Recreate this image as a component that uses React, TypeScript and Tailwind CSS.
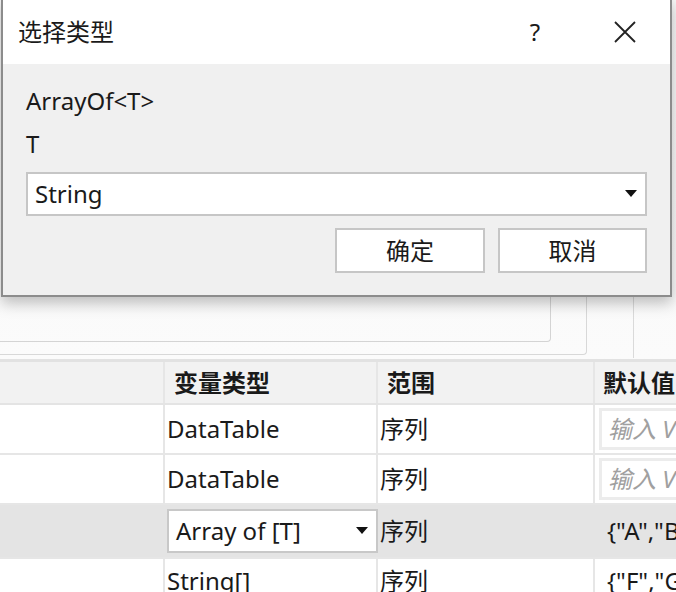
import React from "react";

const font = { fontFamily: '"Noto Sans", "Noto Sans CJK SC", sans-serif' };

function Arrow({ className = "" }: { className?: string }) {
  return (
    <svg width="12" height="8" viewBox="0 0 12 8" className={className}>
      <path d="M0 0 L12 0 L6 7 Z" fill="#111" />
    </svg>
  );
}

function Cell({ w, children, className = "" }: { w: string; children?: React.ReactNode; className?: string }) {
  return <div className={`${w} shrink-0 ${className}`}>{children}</div>;
}

export default function App() {
  return (
    <div
      className="relative w-[676px] h-[592px] overflow-hidden bg-white text-[#1a1a1a]"
      style={font}
    >
      {/* background area behind dialog */}
      <div className="h-[362px] flex bg-gradient-to-b from-[#f7f7f7] to-[#fbfbfb] border-b-[3px] border-[#e2e2e2]">
        <div className="w-[634px] h-[358px] border-r border-[#dadada]">
          <div className="w-[587px] h-[355px] border-r border-b border-[#d8d8d8] rounded-br-[4px]">
            <div className="w-[551px] h-[342px] border-r border-b border-[#d4d4d4] rounded-br-[4px]" />
          </div>
        </div>
      </div>

      {/* table */}
      <div className="text-[24px] leading-none">
        {/* header */}
        <div className="flex h-[43px] bg-[#f2f2f2] border-b-[2px] border-[#e4e4e4] font-bold">
          <Cell w="w-[165px]" className="border-r-[2px] border-[#e6e6e6]" />
          <Cell w="w-[213px]" className="border-r-[2px] border-[#e6e6e6] pl-[9px] flex items-center">变量类型</Cell>
          <Cell w="w-[217px]" className="border-r-[2px] border-[#e6e6e6] pl-[9px] flex items-center">范围</Cell>
          <div className="flex-1 min-w-0 overflow-hidden pl-[8px] flex items-center whitespace-nowrap">默认值</div>
        </div>
        {/* row 1 */}
        {[0, 1].map((i) => (
          <div key={i} className="flex h-[50px] border-b-[2px] border-[#e6e6e6]">
            <Cell w="w-[165px]" className="border-r-[2px] border-[#e6e6e6]" />
            <Cell w="w-[213px]" className="border-r-[2px] border-[#e6e6e6] pl-[2px] flex items-center">DataTable</Cell>
            <Cell w="w-[217px]" className="border-r-[2px] border-[#e6e6e6] pl-[2px] flex items-center">序列</Cell>
            <div className="flex-1 min-w-0 overflow-hidden py-[3px] pl-[4px]">
              <div className="h-full bg-white border-l-[3px] border-t-[3px] border-b-[3px] border-[#ececec] flex items-center pl-[6px] italic text-[#a0a0a0] whitespace-nowrap">
                输入 VB
              </div>
            </div>
          </div>
        ))}
        {/* row 3 selected */}
        <div className="flex h-[52px] bg-[#e4e4e4]">
          <Cell w="w-[165px]" />
          <Cell w="w-[215px]" className="py-[4px] pl-[2px] pr-[2px]">
            <div className="h-full bg-white border-[2px] border-[#c8c8c8] flex items-center pl-[7px] pr-[8px]">
              <span className="flex-1">Array of [T]</span>
              <Arrow />
            </div>
          </Cell>
          <Cell w="w-[215px]" className="flex items-center">序列</Cell>
          <div className="flex-1 min-w-0 overflow-hidden pl-[12px] flex items-center whitespace-nowrap">{'{"A","B"}'}</div>
        </div>
        {/* row 4 */}
        <div className="flex h-[50px] border-t-[2px] border-[#e6e6e6]">
          <Cell w="w-[165px]" className="border-r-[2px] border-[#e6e6e6]" />
          <Cell w="w-[213px]" className="border-r-[2px] border-[#e6e6e6] pl-[2px] pt-[10px]">String[]</Cell>
          <Cell w="w-[217px]" className="border-r-[2px] border-[#e6e6e6] pl-[2px] pt-[10px]">序列</Cell>
          <div className="flex-1 min-w-0 overflow-hidden pl-[12px] pt-[10px] whitespace-nowrap">{'{"F","G"}'}</div>
        </div>
      </div>

      {/* dialog */}
      <div className="absolute left-[1px] top-[-2px] w-[671px] h-[299px] border-[2px] border-[#8c8c8c] bg-[#f0f0f0] shadow-[0_6px_14px_rgba(0,0,0,0.25)] flex flex-col">
        <div className="h-[64px] bg-white flex items-center pl-[15px] pr-[34px] text-[24px]">
          <span className="flex-1">选择类型</span>
          <span className="w-[20px] text-center mr-[69px]">?</span>
          <svg width="22" height="22" viewBox="0 0 22 22">
            <path d="M1 1 L21 21 M21 1 L1 21" stroke="#222" strokeWidth="1.8" />
          </svg>
        </div>
        <div className="flex-1 px-[23px] pt-[22px] text-[24px]">
          <div className="h-[30px] flex items-center">ArrayOf&lt;T&gt;</div>
          <div className="h-[30px] mt-[13px] flex items-center">T</div>
          <div className="mt-[13px] h-[44px] bg-white border-[2px] border-[#c6c6c6] flex items-center pl-[7px] pr-[8px]">
            <span className="flex-1">String</span>
            <Arrow />
          </div>
          <div className="mt-[12px] flex justify-end gap-[13px]">
            <div className="w-[150px] h-[45px] bg-white border-[2px] border-[#c6c6c6] flex items-center justify-center">确定</div>
            <div className="w-[149px] h-[45px] bg-white border-[2px] border-[#c6c6c6] flex items-center justify-center">取消</div>
          </div>
        </div>
      </div>
    </div>
  );
}
